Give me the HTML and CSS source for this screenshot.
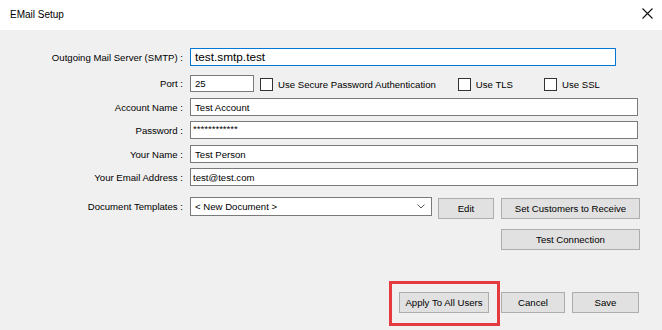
FILE: index.html
```html
<!DOCTYPE html>
<html>
<head>
<meta charset="utf-8">
<link rel="stylesheet" href="styles.css">
</head>
<body>
<div class="window">
  <div class="titlebar">
    <span class="title">EMail Setup</span>
    <svg class="close" width="11" height="11" viewBox="0 0 11 11"><path d="M0.5 0.5 L10.5 10.5 M10.5 0.5 L0.5 10.5" stroke="#111" stroke-width="1.1" fill="none"/></svg>
  </div>
  <div class="content">
    <div class="form">
      <div class="row r-smtp">
        <label class="lbl">Outgoing Mail Server (SMTP) :</label>
        <div class="input focus w-smtp big">test.smtp.test</div>
      </div>
      <div class="row r-port">
        <label class="lbl">Port :</label>
        <div class="input w-port">25</div>
        <span class="cb cb1"></span><span class="cbt">Use Secure Password Authentication</span>
        <span class="cb cb2"></span><span class="cbt">Use TLS</span>
        <span class="cb cb3"></span><span class="cbt">Use SSL</span>
      </div>
      <div class="row r-acc">
        <label class="lbl">Account Name :</label>
        <div class="input w-full">Test Account</div>
      </div>
      <div class="row r-pw">
        <label class="lbl">Password :</label>
        <div class="input w-full pw">************</div>
      </div>
      <div class="row r-name">
        <label class="lbl">Your Name :</label>
        <div class="input w-full">Test Person</div>
      </div>
      <div class="row r-mail">
        <label class="lbl">Your Email Address :</label>
        <div class="input w-full mail">test@test.com</div>
      </div>
      <div class="row r-doc">
        <label class="lbl">Document Templates :</label>
        <div class="combo">
          <span>&lt; New Document &gt;</span>
          <svg class="chev" width="8" height="5" viewBox="0 0 8 5"><path d="M0.5 0.5 L4 4 L7.5 0.5" stroke="#555" stroke-width="1" fill="none"/></svg>
        </div>
        <button class="btn b-edit">Edit</button>
        <button class="btn b-set">Set Customers to Receive</button>
      </div>
      <div class="row r-test">
        <button class="btn b-test">Test Connection</button>
      </div>
    </div>
    <div class="actions">
      <button class="btn b-apply">Apply To All Users</button>
      <button class="btn b-cancel">Cancel</button>
      <button class="btn b-save">Save</button>
    </div>
    <div class="highlight"></div>
  </div>
</div>
</body>
</html>
```

FILE: styles.css
```css
* { box-sizing: border-box; }
html, body { margin: 0; padding: 0; }
body {
  width: 662px;
  height: 330px;
  overflow: hidden;
  font-family: "Liberation Sans", Arial, sans-serif;
  font-size: 9.6px;
  color: #000;
  background: #f0f0f0;
}
.window { width: 662px; height: 330px; display: flex; flex-direction: column; }
.titlebar {
  height: 30px;
  background: #fff;
  display: flex;
  align-items: center;
  justify-content: space-between;
  padding: 0 9px 2px 10px;
}
.title { font-size: 10px; color: #000; }
.close { margin-top: -1px; }
.content {
  position: relative;
  flex: 1;
  background: #f0f0f0;
  padding-top: 18px;
}
.form { display: flex; flex-direction: column; }
.row { display: flex; align-items: center; }
.lbl {
  width: 184px;
  flex: none;
  text-align: right;
  padding-right: 1px;
  margin-right: 6px;
  white-space: nowrap;
}
.input {
  background: #fff;
  border: 1px solid #7a7a7a;
  height: 18px;
  padding: 0 4px;
  display: flex;
  align-items: center;
  white-space: nowrap;
}
.input.focus { border-color: #0078d7; }
.input.big { font-size: 11.8px; padding-left: 4px; }
.w-smtp { width: 426px; }
.w-port { width: 64px; height: 17px; }
.w-full { width: 448px; }
.pw { align-items: flex-start; padding-top: 1px; padding-left: 2px; letter-spacing: 0; }
.mail { padding-left: 2px; }

.r-port { margin-top: 9px; }
.r-acc { margin-top: 6px; }
.r-pw { margin-top: 5px; }
.r-name { margin-top: 6px; }
.r-mail { margin-top: 5px; }
.r-doc { margin-top: 11px; align-items: flex-start; }
.r-doc .lbl { margin-top: 4px; }
.r-test { margin-top: 10px; padding-left: 501px; }

.cb {
  width: 13px;
  height: 13px;
  border: 1px solid #333;
  background: #fff;
  flex: none;
  margin-top: 2px;
}
.cb1 { margin-left: 6px; }
.cb2 { margin-left: 22px; }
.cb3 { margin-left: 31px; }
.cbt { margin-left: 5px; white-space: nowrap; margin-top: 1px; }

.combo {
  width: 242px;
  height: 19px;
  background: #fff;
  border: 1px solid #7a7a7a;
  display: flex;
  align-items: center;
  justify-content: space-between;
  padding: 0 6px 0 4px;
}
.chev { margin-top: 0px; }

.btn {
  font-family: "Liberation Sans", Arial, sans-serif;
  font-size: 9.6px;
  color: #000;
  background: #e1e1e1;
  border: 1px solid #adadad;
  border-radius: 0;
  padding: 0;
  height: 21px;
  display: flex;
  align-items: center;
  justify-content: center;
  white-space: nowrap;
}
.b-edit { width: 56px; margin-left: 6px; margin-top: 1px; }
.b-set { width: 139px; margin-left: 7px; margin-top: 1px; }
.b-test { width: 139px; }

.actions {
  display: flex;
  justify-content: flex-end;
  padding-right: 23px;
  margin-top: 42px;
}
.b-apply { width: 90px; }
.b-cancel { width: 64px; margin-left: 12px; }
.b-save { width: 67px; margin-left: 7px; }

.highlight {
  position: absolute;
  left: 389px;
  top: 251px;
  width: 111px;
  height: 45px;
  border: 3px solid #e53a3f;
}
```
